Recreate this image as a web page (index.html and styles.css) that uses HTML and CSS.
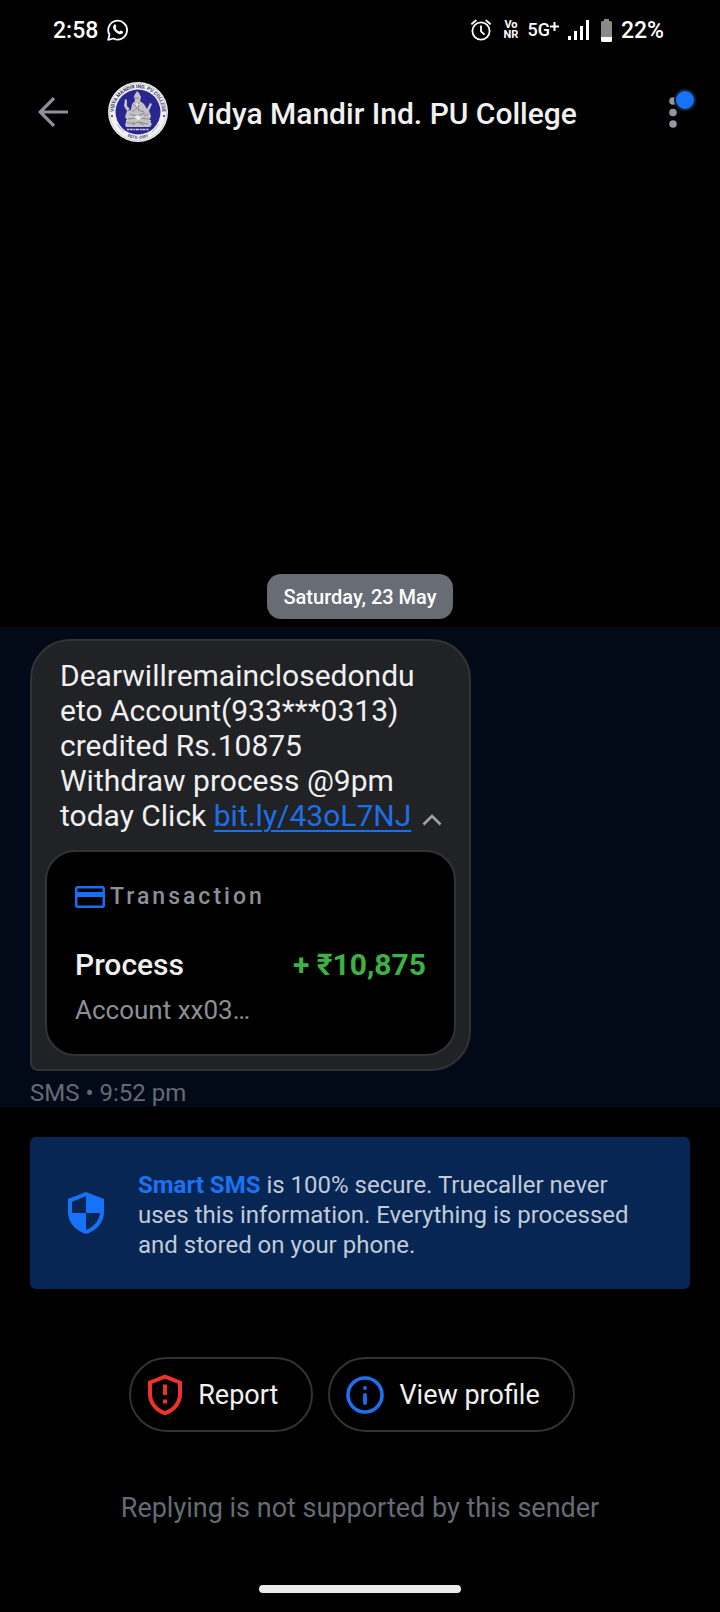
FILE: index.html
```html
<!DOCTYPE html>
<html lang="en">
  <head>
    <meta charset="UTF-8" />
    <meta name="viewport" content="width=device-width, initial-scale=1.0" />
    <title>Vidya Mandir Ind. PU College</title>
    <link rel="stylesheet" href="styles.css">
  </head>
  <body>
    <!-- Status bar -->
    <div class="status-bar">
      <div class="status-left">
        <span>2:58</span>
        <svg width="22" height="22" viewBox="0 0 22 22" fill="none" stroke="#fff">
          <path d="M1.2 20.8l1.3-5A9.4 9.4 0 1 1 6.400 19.500z" stroke-width="1.800" stroke-linejoin="round" />
          <path d="M7.300 5.600c.5-.5 1.100-.3 1.300.1l.8 1.900c.1.400-.7 1.100-.7 1.400.7 1.700 2 2.900 3.700 3.600.4.100 1-1.100 1.400-1l2 1c.4.200.3 1.200-.2 1.700-1.200 1.200-2.700 1.200-4.500.4-2.200-1-3.900-2.800-4.700-4.600-.7-1.700-.3-3.300.9-4.500z" fill="#fff" stroke="none" />
        </svg>
      </div>
      <div class="status-right">
        <svg width="20" height="22" viewBox="0 0 20 22" fill="none" stroke="#fff" stroke-width="1.800" stroke-linecap="round">
          <circle cx="10" cy="12" r="8.600" />
          <path d="M10 7.200v5.200l3 2.800M1 4.800L4.800 1.500M19 4.800L15.200 1.500" />
        </svg>
        <span class="vonr"><span>Vo</span><span>NR</span></span>
        <span class="network">
          <span>5G</span>
          <svg width="9" height="9" viewBox="0 0 9 9" stroke="#fff" stroke-width="2">
            <path d="M4.500 0v9M0 4.500h9" />
          </svg>
        </span>
        <svg width="22" height="20" viewBox="0 0 22 20" fill="#fff">
          <path d="M0 16h3v4H0zM6 11h3v9H6zM12 6h3v14h-3zM18 0h3v20h-3z" />
        </svg>
        <svg class="battery" width="11" height="23" viewBox="0 0 11 23">
          <path d="M3 0h5v2h1.500Q11 2 11 3.500V19H0V3.500Q0 2 1.500 2H3z" fill="#8a8a8a" />
          <path d="M0 18h11v3.500q0 1.500-1.500 1.500h-8Q0 23 0 21.500z" fill="#fff" />
        </svg>
        <span>22%</span>
      </div>
    </div>

    <!-- Conversation header -->
    <header class="header">
      <button class="icon-btn" aria-label="Back">
        <svg width="30" height="30" viewBox="0 0 30 30" fill="none" stroke="#8b929c" stroke-width="3.200">
          <path d="M30 15H3M16 1.200L2.200 15 16 28.800" />
        </svg>
      </button>
      <svg class="avatar" viewBox="0 0 60 60" role="img" aria-label="College seal">
        <defs>
          <path id="arcTop" d="M6.500 36A24.200 24.200 0 1 1 53.500 36" />
          <path id="arcBottom" d="M14 51.500A27 27 0 0 0 46 51.500" />
        </defs>
        <circle cx="30" cy="30" r="30" fill="#f1f1f1" />
        <circle cx="30" cy="30" r="28.500" fill="none" stroke="#aaa" stroke-width=".5" />
        <circle cx="30" cy="30" r="22.500" fill="#29278f" />
        <text class="seal-text"><textPath href="#arcTop" startOffset="50%" text-anchor="middle">VIDYA MANDIR IND. PU COLLEGE</textPath></text>
        <text class="seal-text seal-small"><textPath href="#arcBottom" startOffset="50%" text-anchor="middle">ESTD.-2001</textPath></text>
        <path d="M9 42q3 5 7 8M51 42q-3 5-7 8" fill="none" stroke="#999" stroke-width=".7" />
        <circle cx="4" cy="34" r="1" fill="#29278f" />
        <circle cx="56" cy="34" r="1" fill="#29278f" />
        <!-- Seated figure -->
        <g fill="#c3c3c3">
          <path d="M29 9l2 2 2 4-1 4 4 3 3 5 3-6 2 1-3 7 2 5-2 5 3 3-2 3H18l-1-3 3-3-3-4 2-6 4-1 1-6 3-3-1-5z" />
          <path d="M17 17l2 1v6l3 3-3 2-3-5z" />
          <path d="M18 38h25l-1 7H18z" />
        </g>
        <g fill="none" stroke="#77777f" stroke-width=".8">
          <path d="M27 16h4M25 22l4 4-5 4M31 20l-1 8 6 2M22 32l7 2 8-3M20 37l9-1 12 1M19 41h8M31 40l9 2M36 34l4-2M24 43l6-3 6 3" />
        </g>
        <path d="M26 35l4-2 4 3-4 2zM28 21l3 1-2 3z" fill="#eee" />
        <path d="M19 47.500h22" stroke="#d5d5ea" stroke-width="1.500" stroke-dasharray="2 .6 3 .8" />
      </svg>
      <h1 class="title">Vidya Mandir Ind. PU College</h1>
      <button class="icon-btn more" aria-label="More options">
        <svg width="8" height="31" viewBox="0 0 8 31" fill="#9298a2">
          <circle cx="4" cy="4" r="3.800" />
          <circle cx="4" cy="15.500" r="3.800" />
          <circle cx="4" cy="27" r="3.800" />
        </svg>
        <span class="badge"></span>
      </button>
    </header>

    <!-- Messages -->
    <main class="conversation">
      <div class="date-chip">Saturday, 23 May</div>

      <section class="message-row">
        <div class="bubble">
          <div class="bubble-text">
            <p>Dearwillremainclosedondueto Account(933***0313) credited Rs.10875 Withdraw process @9pm today Click <a href="#">bit.ly/43oL7NJ</a></p>
            <button class="icon-btn" aria-label="Collapse">
              <svg width="20" height="12" viewBox="0 0 20 12" fill="none" stroke="#a2a3a5" stroke-width="2.600">
                <path d="M1.500 10.500L10 2l8.500 8.500" />
              </svg>
            </button>
          </div>
          <div class="card">
            <div class="card-type">
              <svg width="30" height="22" viewBox="0 0 30 22">
                <rect x="1.250" y="1.250" width="27.500" height="19.500" rx="1.500" fill="none" stroke="#1570f5" stroke-width="2.500" />
                <path d="M1 6h28v5H1z" fill="#1570f5" />
              </svg>
              <span>Transaction</span>
            </div>
            <div class="card-amount">
              <span>Process</span>
              <strong>+ ₹10,875</strong>
            </div>
            <div class="card-account">Account xx03…</div>
          </div>
        </div>
        <div class="meta">SMS • 9:52 pm</div>
      </section>

      <div class="secure-banner">
        <svg width="36" height="42" viewBox="0 0 36 42">
          <path d="M18 0l18 7v13c0 10-7 18.500-18 22C7 38.500 0 30 0 20V7z" fill="#1672f9" />
          <path d="M18 4.200V21H4V9.700zM18 21h14c-.8 7.500-6 14-14 17z" fill="#072654" />
        </svg>
        <p><b>Smart SMS</b> is 100% secure. Truecaller never uses this information. Everything is processed and stored on your phone.</p>
      </div>
    </main>

    <!-- Sender actions -->
    <footer class="footer">
      <div class="actions">
        <button class="pill">
          <svg width="36" height="42" viewBox="0 0 36 42" fill="none" stroke="#ee3426">
            <path d="M18 2.600l15 5.900v11.500c0 8.800-6 16-15 19.200C9 36 3 28.800 3 20V8.500z" stroke-width="4" />
            <path d="M18 10.500v10.500M18 25.500v4" stroke-width="4" />
          </svg>
          Report
        </button>
        <button class="pill">
          <svg width="38" height="38" viewBox="0 0 38 38" fill="none" stroke="#1d70ee">
            <circle cx="19" cy="19" r="17" stroke-width="3.600" />
            <path d="M19 19v8" stroke-width="3.800" stroke-linecap="round" />
            <circle cx="19" cy="12" r="1.900" fill="#1d70ee" stroke="none" />
          </svg>
          View profile
        </button>
      </div>
      <p class="reply-note">Replying is not supported by this sender</p>
      <div class="home-bar"></div>
    </footer>
  </body>
</html>
```

FILE: styles.css
```css
* {
  box-sizing: border-box;
}
body {
  font-family: Roboto, sans-serif;
  background-color: #000;
  color: #f0f0f0;
  margin: 0;
  min-height: 100vh;
  display: flex;
  flex-direction: column;
}
p,
h1 {
  margin: 0;
}
svg {
  display: block;
  flex-shrink: 0;
}
button {
  font-family: inherit;
  color: inherit;
  background: none;
  cursor: pointer;
}
.icon-btn {
  border: none;
  padding: 0;
}

/* Status bar */
.status-bar {
  display: flex;
  justify-content: space-between;
  align-items: center;
  height: 60px;
  padding: 0 56px 0 53px;
  font-size: 23px;
  font-weight: 500;
  color: #fff;
}
.status-left,
.status-right {
  display: flex;
  align-items: center;
  gap: 9px;
}
.vonr {
  display: flex;
  flex-direction: column;
  align-items: center;
  font-size: 11px;
  line-height: 10px;
  font-weight: 700;
  margin-left: 4px;
}
.network {
  display: flex;
  align-items: flex-start;
  font-size: 18px;
  line-height: 20px;
}
.network svg {
  margin-top: 2px;
}
.battery {
  margin-left: 2px;
}

/* Header */
.header {
  display: flex;
  align-items: center;
  height: 104px;
  padding: 0 43px 0 38px;
}
.avatar {
  width: 60px;
  height: 60px;
  margin: 0 20px 0 40px;
}
.seal-text {
  font-size: 5px;
  font-weight: 700;
  fill: #35346f;
}
.seal-small {
  font-size: 4px;
}
.title {
  flex: 1;
  padding-top: 4px;
  font-size: 30px;
  line-height: 36px;
  font-weight: 500;
}
.more {
  position: relative;
}
.badge {
  position: absolute;
  top: -8px;
  left: 5px;
  width: 22px;
  height: 22px;
  border: 2px solid #152235;
  border-radius: 50%;
  background-color: #1672f9;
}

/* Messages */
.conversation {
  flex: 1;
  display: flex;
  flex-direction: column;
  justify-content: flex-end;
}
.date-chip {
  align-self: center;
  padding: 11px 16px 10px;
  margin-bottom: 8px;
  border-radius: 14px;
  background-color: #676c75;
  color: #fff;
  font-size: 20px;
  line-height: 24px;
  font-weight: 500;
}
.message-row {
  padding: 12px 30px 0;
  background-color: #020a17;
}
.bubble {
  max-width: 441px;
  padding: 17px 13px 13px;
  border: 2px solid #323335;
  border-radius: 40px 40px 40px 8px;
  background-color: #212226;
}
.bubble-text {
  display: flex;
  align-items: flex-end;
  gap: 4px;
  padding: 0 14px 0 15px;
  font-size: 30px;
  line-height: 35px;
}
.bubble-text p {
  flex: 1;
  min-width: 0;
  overflow-wrap: anywhere;
}
.bubble-text .icon-btn {
  padding-bottom: 7px;
}
.bubble-text a {
  color: #1e6fe6;
  text-decoration-thickness: 2px;
  text-underline-offset: 4px;
}
.card {
  margin-top: 17px;
  padding: 29px 28px 28px;
  border: 2px solid #323335;
  border-radius: 30px;
  background-color: #000;
}
.card-type {
  display: flex;
  align-items: center;
  gap: 5px;
  color: #8b9097;
  font-size: 23px;
  line-height: 32px;
  font-weight: 500;
  letter-spacing: 3px;
}
.card-amount {
  display: flex;
  justify-content: space-between;
  margin-top: 34px;
  font-size: 30px;
  line-height: 36px;
  font-weight: 500;
}
.card-amount strong {
  color: #3cb244;
  font-weight: 700;
}
.card-account {
  margin-top: 11px;
  color: #8b9097;
  font-size: 26px;
  line-height: 32px;
}
.meta {
  padding: 8px 0 0;
  color: #656b75;
  font-size: 24px;
  line-height: 28px;
}
.secure-banner {
  display: flex;
  align-items: center;
  gap: 34px;
  margin: 30px 30px 0;
  padding: 31px 38px;
  border-radius: 6px;
  background-color: #072654;
  color: #c1cad9;
  font-size: 24px;
  line-height: 30px;
}
.secure-banner p {
  padding-top: 2px;
  margin-bottom: -2px;
}
.secure-banner b {
  color: #1b72f3;
}

/* Footer */
.footer {
  padding: 68px 0 19px;
}
.actions {
  display: flex;
  justify-content: center;
  gap: 15px;
  padding-right: 16px;
}
.pill {
  display: flex;
  align-items: center;
  gap: 15px;
  height: 75px;
  padding: 0 33px 0 16px;
  border: 2px solid #323335;
  border-radius: 38px;
  font-size: 27px;
}
.reply-note {
  margin-top: 60px;
  text-align: center;
  color: #656b75;
  font-size: 27px;
  line-height: 32px;
}
.home-bar {
  width: 28%;
  height: 8px;
  margin: 61px auto 0;
  border-radius: 4px;
  background-color: #ebebeb;
}
```
